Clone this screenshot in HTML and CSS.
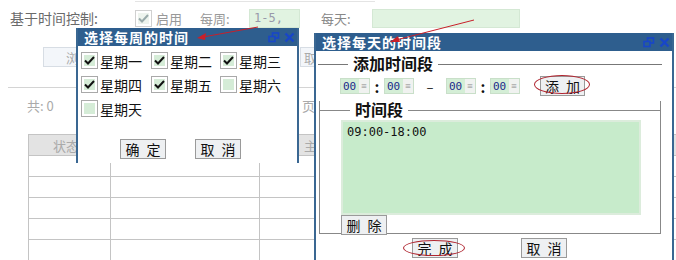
FILE: index.html
```html
<!DOCTYPE html>
<html lang="zh-CN">
<head>
    <meta charset="UTF-8">
    <title>基于时间控制</title>
    <link rel="stylesheet" href="styles.css">
</head>
<body>
    <div class="page">
        <div class="topline"></div>

        <div class="row filter">
            <span class="lbl">基于时间控制:</span>
            <span class="cb cb-off">
                <svg width="11" height="9" viewBox="0 0 11 9"><path d="M1 4.5 L4 7.5 L10 1" fill="none" stroke="#9aa" stroke-width="2"/></svg>
            </span>
            <span class="muted w-enable">启用</span>
            <span class="muted w-week">每周:</span>
            <span class="field f-week">1-5,</span>
            <span class="muted w-day">每天:</span>
            <span class="field f-day"></span>
        </div>

        <div class="row actions">
            <span class="ghost g-browse">浏览</span>
            <span class="ghost g-cancel">取消</span>
        </div>

        <div class="divider"></div>

        <div class="row pager">
            <span class="total">共: 0</span>
            <span class="pages">页</span>
        </div>

        <table class="grid">
            <tr><th class="c1">状态</th><th class="c2"></th><th class="c3">主</th><th></th></tr>
            <tr><td></td><td></td><td></td><td></td></tr>
            <tr><td></td><td></td><td></td><td></td></tr>
            <tr><td></td><td></td><td></td><td></td></tr>
            <tr><td></td><td></td><td></td><td></td></tr>
            <tr><td></td><td></td><td></td><td></td></tr>
        </table>

        <!-- weekly dialog -->
        <div class="dialog dlg-week">
            <div class="dlg-title">
                <span>选择每周的时间</span>
                <span class="tools">
                    <svg width="12" height="11" viewBox="0 0 12 11"><rect x="4.5" y="1" width="6" height="5" fill="none" stroke="#1846c8" stroke-width="1.6"/><rect x="1" y="4.5" width="6" height="5" fill="#2e5e8e" stroke="#1846c8" stroke-width="1.6"/></svg>
                    <svg width="11" height="11" viewBox="0 0 11 11"><path d="M1.5 1.5 L9.5 9.5 M9.5 1.5 L1.5 9.5" stroke="#1846c8" stroke-width="2.4"/></svg>
                </span>
            </div>
            <div class="days">
                <label class="day"><span class="cb"><svg width="11" height="9" viewBox="0 0 11 9"><path d="M1 4.5 L4 7.5 L10 1" fill="none" stroke="#111" stroke-width="2"/></svg></span>星期一</label>
                <label class="day"><span class="cb"><svg width="11" height="9" viewBox="0 0 11 9"><path d="M1 4.5 L4 7.5 L10 1" fill="none" stroke="#111" stroke-width="2"/></svg></span>星期二</label>
                <label class="day"><span class="cb"><svg width="11" height="9" viewBox="0 0 11 9"><path d="M1 4.5 L4 7.5 L10 1" fill="none" stroke="#111" stroke-width="2"/></svg></span>星期三</label>
                <label class="day"><span class="cb"><svg width="11" height="9" viewBox="0 0 11 9"><path d="M1 4.5 L4 7.5 L10 1" fill="none" stroke="#111" stroke-width="2"/></svg></span>星期四</label>
                <label class="day"><span class="cb"><svg width="11" height="9" viewBox="0 0 11 9"><path d="M1 4.5 L4 7.5 L10 1" fill="none" stroke="#111" stroke-width="2"/></svg></span>星期五</label>
                <label class="day"><span class="cb"></span>星期六</label>
                <label class="day"><span class="cb"></span>星期天</label>
            </div>
            <div class="dlg-buttons week-buttons">
                <span class="btn">确 定</span>
                <span class="btn">取 消</span>
            </div>
        </div>

        <!-- daily dialog -->
        <div class="dialog dlg-day">
            <div class="dlg-title">
                <span>选择每天的时间段</span>
                <span class="tools">
                    <svg width="12" height="11" viewBox="0 0 12 11"><rect x="4.5" y="1" width="6" height="5" fill="none" stroke="#1846c8" stroke-width="1.6"/><rect x="1" y="4.5" width="6" height="5" fill="#2e5e8e" stroke="#1846c8" stroke-width="1.6"/></svg>
                    <svg width="11" height="11" viewBox="0 0 11 11"><path d="M1.5 1.5 L9.5 9.5 M9.5 1.5 L1.5 9.5" stroke="#1846c8" stroke-width="2.4"/></svg>
                </span>
            </div>

            <div class="section add">
                <div class="legend">添加时间段</div>
                <div class="picker">
                    <span class="sel">00<i>&#8801;</i></span>
                    <span class="colon">:</span>
                    <span class="sel">00<i>&#8801;</i></span>
                    <span class="dash">–</span>
                    <span class="sel">00<i>&#8801;</i></span>
                    <span class="colon">:</span>
                    <span class="sel">00<i>&#8801;</i></span>
                    <span class="btn btn-add">添 加<span class="ring ring-add"></span></span>
                </div>
            </div>

            <div class="section list">
                <div class="legend">时间段</div>
                <div class="ranges">09:00-18:00</div>
                <span class="btn btn-del">删 除</span>
            </div>

            <div class="dlg-buttons day-buttons">
                <span class="btn">完 成<span class="ring ring-done"></span></span>
                <span class="btn">取 消</span>
            </div>
        </div>

        <svg class="arrows" width="676" height="260" viewBox="0 0 676 260">
            <line x1="258" y1="27" x2="203" y2="37" stroke="#c8202a" stroke-width="1"/>
            <path d="M197 38 L206 33 L205 40 Z" fill="#c8202a"/>
            <line x1="474" y1="20" x2="396" y2="40" stroke="#c8202a" stroke-width="1"/>
            <path d="M390 42 L398 36 L400 42 Z" fill="#c8202a"/>
        </svg>
    </div>
</body>
</html>
```

FILE: styles.css
```css
* {
    margin: 0;
    padding: 0;
    box-sizing: border-box;
}

body {
    background: #fff;
    font-family: 'Noto Sans CJK SC', 'DejaVu Sans', sans-serif;
    font-size: 13px;
    color: #111;
}

.page {
    position: relative;
    width: 676px;
    height: 260px;
    overflow: hidden;
    background: #fff;
}

.topline {
    height: 2px;
    margin-left: 135px;
    width: 240px;
    border-bottom: 1px solid #e4e4e4;
}

.row {
    display: flex;
    align-items: center;
    line-height: 1;
}

/* first row: time control */
.filter {
    margin-top: 6px;
    height: 20px;
    color: #777;
}

.lbl {
    width: 135px;
    padding-left: 10px;
    color: #6a6a6a;
    font-size: 14px;
}

.cb {
    width: 17px;
    height: 17px;
    border: 1px solid #a9a9a9;
    background: #fff;
    padding: 2px;
    display: inline-flex;
    align-items: center;
    justify-content: center;
    flex-shrink: 0;
    position: relative;
}

.cb::before {
    content: "";
    position: absolute;
    inset: 2px;
    background: #d5ecd7;
}

.cb svg {
    position: relative;
}

.cb-off {
    border-color: #d0d0d0;
}

.cb-off::before {
    background: #eef4ee;
}

.muted {
    color: #999;
    font-size: 13px;
}

.w-enable {
    width: 48px;
    padding-left: 4px;
}

.w-week {
    width: 49px;
}

.w-day {
    width: 51px;
    margin-left: 21px;
    color: #888;
}

.field {
    height: 19px;
    background: #e1f3e1;
    border: 1px solid #d4e8d4;
    font-family: 'DejaVu Sans Mono', monospace;
    font-size: 12px;
    color: #99a;
    padding: 2px 4px;
}

.f-week {
    width: 51px;
}

.f-day {
    width: 148px;
}

/* second row */
.actions {
    margin-top: 19px;
    height: 20px;
}

.ghost {
    height: 20px;
    border: 1px solid #d7dde4;
    background: #f3f6fa;
    color: #aaa;
    font-size: 13px;
    padding: 3px 0 0 22px;
}

.g-browse {
    margin-left: 43px;
    width: 80px;
}

.g-cancel {
    margin-left: 177px;
    width: 60px;
    padding-left: 3px;
}

.divider {
    margin: 20px 0 0 8px;
    border-top: 1px solid #d4d4d4;
}

.pager {
    margin-top: 9px;
    height: 16px;
    color: #aaa;
}

.total {
    margin-left: 27px;
    width: 275px;
}

/* table */
.grid {
    margin: 21px 0 0 28px;
    border-collapse: collapse;
    width: 700px;
    table-layout: fixed;
}

.grid th,
.grid td {
    height: 21px;
    border: 1px solid #c4c4c4;
    font-weight: normal;
    color: #aaa;
}

.grid th {
    background: #e3e3e3;
    text-align: left;
}

.grid .c1 {
    width: 82px;
    padding-left: 24px;
}

.grid .c2 {
    width: 149px;
}

.grid .c3 {
    width: 120px;
    padding-left: 44px;
}

/* dialogs */
.dialog {
    position: absolute;
    background: #fff;
    border-left: 2px solid #3a6792;
    border-right: 2px solid #3a6792;
}

.dlg-title {
    height: 18px;
    background: #2e5e8e;
    color: #fff;
    font-weight: bold;
    font-size: 14px;
    display: flex;
    justify-content: space-between;
    align-items: center;
    padding: 0 0 0 6px;
    letter-spacing: 1px;
}

.tools {
    display: flex;
    gap: 4px;
    align-items: center;
    padding-right: 2px;
}

.dlg-week {
    left: 76px;
    top: 28px;
    width: 223px;
    height: 135px;
}

.days {
    display: grid;
    grid-template-columns: 70px 69px 70px;
    row-gap: 7px;
    padding: 6px 0 0 3px;
}

.day {
    display: flex;
    align-items: center;
    gap: 2px;
    font-size: 14px;
    height: 17px;
}

.dlg-buttons {
    display: flex;
}

.btn {
    position: relative;
    display: inline-flex;
    align-items: center;
    justify-content: center;
    width: 46px;
    height: 20px;
    border: 1px solid #9a9a9a;
    background: #eef0f2;
    font-size: 14px;
    color: #111;
    letter-spacing: 2px;
    padding-left: 2px;
}

.week-buttons {
    margin: 22px 0 0 42px;
    gap: 29px;
}

.dlg-day {
    left: 314px;
    top: 33px;
    width: 360px;
    height: 240px;
}

.section {
    position: relative;
}

.legend {
    font-size: 16px;
    font-weight: bold;
    line-height: 1;
    background: #fff;
    padding: 0 5px;
    margin-left: 30px;
    width: max-content;
    position: relative;
}

.add {
    margin: 4px 10px 0 2px;
}

.add::before {
    content: "";
    position: absolute;
    left: 0;
    right: 0;
    top: 9px;
    border-top: 1px solid #777;
}

.picker {
    display: flex;
    align-items: center;
    height: 22px;
    margin: 4px 0 0 22px;
}

.sel {
    width: 30px;
    height: 16px;
    background: #d4eed6;
    border: 1px solid #c9dfc9;
    font-family: 'DejaVu Sans Mono', monospace;
    font-size: 11px;
    color: #1a2a8a;
    display: flex;
    align-items: center;
    padding-left: 2px;
    justify-content: space-between;
}

.sel i {
    font-style: normal;
    font-size: 9px;
    color: #aaa;
    background: #f0f2f0;
    height: 100%;
    width: 10px;
    display: flex;
    align-items: center;
    justify-content: center;
}

.colon {
    width: 14px;
    text-align: center;
    font-weight: bold;
    font-size: 15px;
}

.dash {
    width: 32px;
    text-align: center;
}

.btn-add {
    margin-left: 20px;
    width: 45px;
}

.ring {
    position: absolute;
    border: 1px solid #b02530;
    border-radius: 50%;
}

.ring-add {
    left: -7px;
    right: -6px;
    top: -2px;
    bottom: 1px;
}

.ring-done {
    left: -10px;
    right: -8px;
    top: 1px;
    bottom: 1px;
}

.list {
    margin: 4px 11px 0 3px;
    border: 1px solid #888;
    border-top: none;
    height: 133px;
}

.list::before {
    content: "";
    position: absolute;
    left: 0;
    right: -1px;
    top: 9px;
    border-top: 1px solid #888;
}

.list .legend {
    margin-top: 1px;
}

.ranges {
    margin: 3px 0 0 21px;
    width: 300px;
    height: 95px;
    background: #c7ebcb;
    border: 2px solid #dcecdc;
    font-family: 'DejaVu Sans Mono', monospace;
    font-size: 12px;
    padding: 3px 4px;
}

.btn-del {
    margin-left: 21px;
}

.day-buttons {
    margin: 4px 0 0 96px;
    gap: 63px;
}

.arrows {
    position: absolute;
    left: 0;
    top: 0;
    pointer-events: none;
}
```
